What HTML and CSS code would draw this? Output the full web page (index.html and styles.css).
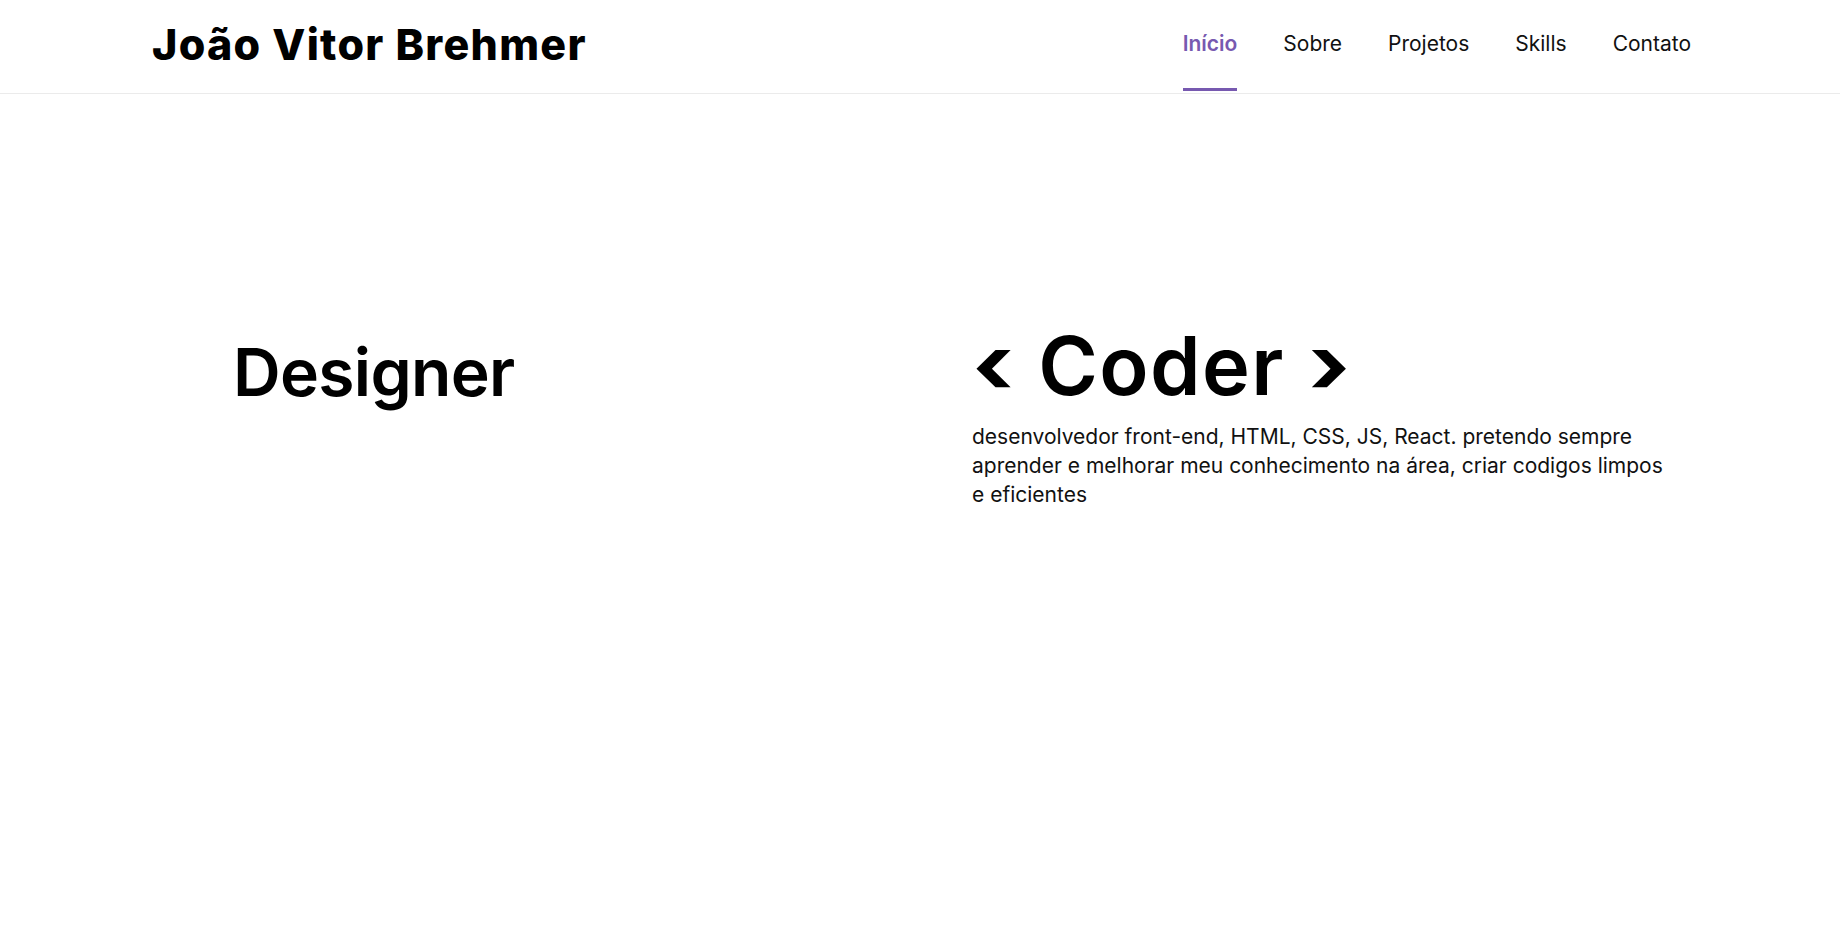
FILE: index.html
```html
<!DOCTYPE html>
<html lang="pt-BR">
<head>
<meta charset="utf-8">
<title>João Vitor Brehmer</title>
<link rel="stylesheet" href="styles.css">
</head>
<body>
<header class="header">
  <div class="container header-inner">
    <h1 class="logo">João Vitor Brehmer</h1>
    <nav class="nav">
      <a class="nav-link active" href="#">Início</a>
      <a class="nav-link" href="#">Sobre</a>
      <a class="nav-link" href="#">Projetos</a>
      <a class="nav-link" href="#">Skills</a>
      <a class="nav-link" href="#">Contato</a>
    </nav>
  </div>
</header>
<main class="hero">
  <div class="container hero-inner">
    <section class="hero-left">
      <h2 class="designer">Designer</h2>
    </section>
    <section class="hero-right">
      <h2 class="coder"><span class="chev chev-left">‹</span> Coder <span class="chev chev-right">›</span></h2>
      <p class="desc">desenvolvedor front-end, HTML, CSS, JS, React. pretendo sempre aprender e melhorar meu conhecimento na área, criar codigos limpos e eficientes</p>
    </section>
  </div>
</main>
</body>
</html>
```
FILE: styles.css
```css
* { box-sizing: border-box; }
html, body { margin: 0; padding: 0; background: #fff; }
body {
  font-family: Inter, "Noto Sans", "Liberation Sans", sans-serif;
  color: #000;
}
.container {
  max-width: 1536px;
  margin: 0 auto;
}
.header {
  border-bottom: 1px solid #ebebeb;
}
.header-inner {
  height: 93px;
  display: flex;
  justify-content: space-between;
  align-items: stretch;
}
.logo {
  margin: 0;
  align-self: center;
  font-size: 43px;
  font-weight: 800;
  letter-spacing: 1.3px;
  line-height: 1;
  padding-bottom: 4px;
}
.nav {
  display: flex;
  gap: 46px;
  margin-right: -3px;
}
.nav-link {
  display: flex;
  align-items: center;
  text-decoration: none;
  color: #111;
  font-size: 21px;
  font-weight: 400;
  border-bottom: 3px solid transparent;
  margin-bottom: 2px;
  padding-bottom: 1px;
}
.nav-link.active {
  color: #7759b0;
  font-weight: 600;
  border-bottom-color: #7759b0;
}
.hero-inner {
  display: grid;
  grid-template-columns: 1fr 1fr;
  padding-top: 224px;
}
.hero-left {
  padding-left: 81px;
}
.hero-right {
  padding-left: 52px;
}
.designer {
  margin: 15px 0 0;
  font-size: 66px;
  font-weight: 600;
  letter-spacing: -0.7px;
  line-height: 1.2;
}
.coder {
  margin: 0;
  font-size: 81px;
  font-weight: 600;
  letter-spacing: 1.4px;
  word-spacing: 3px;
  line-height: 1.2;
}
.chev {
  display: inline-block;
  font-weight: 700;
  line-height: 0;
  transform: scaleX(1.2);
  vertical-align: 0.02em;
}
.chev-left {
  margin-left: 4px;
  margin-right: 1px;
}
.chev-right {
  margin-left: 2px;
}
.desc {
  margin: 7px 0 0;
  max-width: 700px;
  font-size: 21px;
  line-height: 29px;
  color: #111;
}
```
